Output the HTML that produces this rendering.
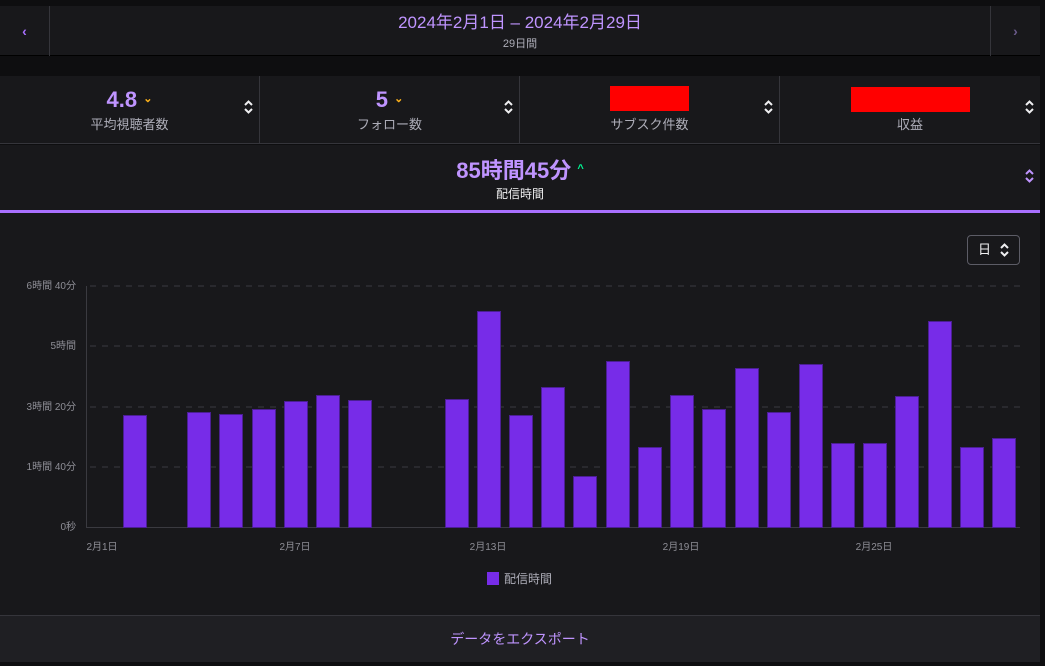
<!DOCTYPE html>
<html><head><meta charset="utf-8"><style>
*{margin:0;padding:0;box-sizing:border-box}
body{width:1045px;height:666px;background:#0e0e10;font-family:"Liberation Sans","Noto Sans CJK JP",sans-serif;position:relative;overflow:hidden;color:#adadb8}
.abs{position:absolute}
.hdr{left:0;top:6px;width:1040px;height:50px;background:#18181b;border-bottom:1px solid #000}
.nav{top:0;width:50px;height:50px;color:#a970ff;font-size:14px;text-align:center;line-height:50px;font-weight:bold}
.metrics{left:0;top:76px;width:1040px;height:68px;background:#18181b;border-bottom:1px solid #35353b}
.cell{top:0;height:68px;width:260px;border-right:1px solid #35353b;text-align:center}
.val{font-size:22px;font-weight:bold;color:#bf94ff;margin-top:11px;height:27px}
.lbl{font-size:13px;color:#adadb8}
.ud{position:absolute;right:6px;top:24px}
.panel{left:0;top:145px;width:1040px;height:517px;background:#18181b}
</style></head><body>
<div class="abs hdr">
 <div class="abs nav" style="left:0;border-right:1px solid #35353b">‹</div>
 <div class="abs" style="left:50px;width:940px;top:2px;text-align:center;color:#bf94ff;font-size:17px">2024年2月1日 – 2024年2月29日</div>
 <div class="abs" style="left:50px;width:940px;top:29px;text-align:center;color:#adadb8;font-size:11px">29日間</div>
 <div class="abs nav" style="left:990px;border-left:1px solid #35353b;color:#6a5a8a">›</div>
</div>
<div class="abs metrics">
 <div class="abs cell" style="left:0"><div class="val">4.8 <span style="color:#ffb31a;font-size:11px;vertical-align:5px">⌄</span></div><div class="lbl">平均視聴者数</div><svg class="ud" width="9" height="14" viewBox="0 0 9 14"><path d="M1 5 L4.5 1.5 L8 5 M1 9 L4.5 12.5 L8 9" stroke="#efeff1" stroke-width="2" fill="none"/></svg></div>
 <div class="abs cell" style="left:260px"><div class="val">5 <span style="color:#ffb31a;font-size:11px;vertical-align:5px">⌄</span></div><div class="lbl">フォロー数</div><svg class="ud" width="9" height="14" viewBox="0 0 9 14"><path d="M1 5 L4.5 1.5 L8 5 M1 9 L4.5 12.5 L8 9" stroke="#efeff1" stroke-width="2" fill="none"/></svg></div>
 <div class="abs cell" style="left:520px"><div style="width:79px;height:25px;background:#f00;margin:10px auto 3px"></div><div class="lbl">サブスク件数</div><svg class="ud" width="9" height="14" viewBox="0 0 9 14"><path d="M1 5 L4.5 1.5 L8 5 M1 9 L4.5 12.5 L8 9" stroke="#efeff1" stroke-width="2" fill="none"/></svg></div>
 <div class="abs cell" style="left:780px;border-right:none"><div style="width:119px;height:25px;background:#f00;margin:11px auto 2px"></div><div class="lbl">収益</div><svg class="ud" width="9" height="14" viewBox="0 0 9 14"><path d="M1 5 L4.5 1.5 L8 5 M1 9 L4.5 12.5 L8 9" stroke="#efeff1" stroke-width="2" fill="none"/></svg></div>
</div>
<div class="abs panel">
 <div class="abs" style="left:0;top:8px;width:1040px;text-align:center;font-size:22px;font-weight:bold;color:#bf94ff">85時間45分 <span style="color:#00f593;font-size:11px;vertical-align:6px">^</span></div>
 <div class="abs" style="left:0;top:40px;width:1040px;text-align:center;font-size:12px;color:#efeff1">配信時間</div>
 <svg class="abs" style="right:6px;top:24px" width="9" height="14" viewBox="0 0 9 14"><path d="M1 5 L4.5 1.5 L8 5 M1 9 L4.5 12.5 L8 9" stroke="#bf94ff" stroke-width="2" fill="none"/></svg>
 <div class="abs" style="left:0;top:65px;width:1040px;height:3px;background:#a970ff"></div>
 <div class="abs" style="left:967px;top:90px;width:53px;height:30px;border:1px solid #5c5c66;border-radius:4px;color:#efeff1;font-size:13px;line-height:28px;padding-left:10px">日</div>
 <svg class="abs" style="left:1000px;top:98px" width="9" height="14" viewBox="0 0 9 14"><path d="M1 5 L4.5 1.5 L8 5 M1 9 L4.5 12.5 L8 9" stroke="#efeff1" stroke-width="2" fill="none"/></svg>
 <div class="abs" style="left:0;top:470px;width:1040px;height:1px;background:#35353b"></div>
 <div class="abs" style="left:0;top:471px;width:1040px;height:46px;background:#1f1f23;text-align:center;line-height:46px;color:#bf94ff;font-size:14px">データをエクスポート</div>
</div>
<svg class="abs" style="left:0;top:0" width="1045" height="666" font-family="Liberation Sans,Noto Sans CJK JP,sans-serif">
<g stroke="#3a3a40" stroke-dasharray="6,6">
<line x1="90" y1="286" x2="1020" y2="286"/><line x1="90" y1="346" x2="1020" y2="346"/><line x1="90" y1="407" x2="1020" y2="407"/><line x1="90" y1="467" x2="1020" y2="467"/>
</g>
<line x1="86" y1="527.5" x2="1020" y2="527.5" stroke="#3a3a40"/>
<line x1="86.5" y1="286" x2="86.5" y2="528" stroke="#3a3a40"/>
<g fill="#8e8e96" font-size="10" text-anchor="end">
<text x="76" y="289">6時間 40分</text><text x="76" y="349">5時間</text><text x="76" y="410">3時間 20分</text><text x="76" y="470">1時間 40分</text><text x="76" y="530">0秒</text>
</g>
<g fill="#8e8e96" font-size="10" text-anchor="middle">
<text x="102" y="550">2月1日</text><text x="295" y="550">2月7日</text><text x="488" y="550">2月13日</text><text x="681" y="550">2月19日</text><text x="874" y="550">2月25日</text>
</g>
<g fill="#772ce8" stroke="#4b1f94" stroke-width="1">
<rect x="123.5" y="415.5" width="23" height="112"/>
<rect x="187.5" y="412.5" width="23" height="115"/>
<rect x="219.5" y="414.5" width="23" height="113"/>
<rect x="252.5" y="409.5" width="23" height="118"/>
<rect x="284.5" y="401.5" width="23" height="126"/>
<rect x="316.5" y="395.5" width="23" height="132"/>
<rect x="348.5" y="400.5" width="23" height="127"/>
<rect x="445.5" y="399.5" width="23" height="128"/>
<rect x="477.5" y="311.5" width="23" height="216"/>
<rect x="509.5" y="415.5" width="23" height="112"/>
<rect x="541.5" y="387.5" width="23" height="140"/>
<rect x="573.5" y="476.5" width="23" height="51"/>
<rect x="606.5" y="361.5" width="23" height="166"/>
<rect x="638.5" y="447.5" width="23" height="80"/>
<rect x="670.5" y="395.5" width="23" height="132"/>
<rect x="702.5" y="409.5" width="23" height="118"/>
<rect x="735.5" y="368.5" width="23" height="159"/>
<rect x="767.5" y="412.5" width="23" height="115"/>
<rect x="799.5" y="364.5" width="23" height="163"/>
<rect x="831.5" y="443.5" width="23" height="84"/>
<rect x="863.5" y="443.5" width="23" height="84"/>
<rect x="895.5" y="396.5" width="23" height="131"/>
<rect x="928.5" y="321.5" width="23" height="206"/>
<rect x="960.5" y="447.5" width="23" height="80"/>
<rect x="992.5" y="438.5" width="23" height="89"/>
</g>
<rect x="487" y="572" width="12" height="13" fill="#772ce8"/>
<text x="504" y="583" fill="#adadb8" font-size="12">配信時間</text>
</svg>
</body></html>
